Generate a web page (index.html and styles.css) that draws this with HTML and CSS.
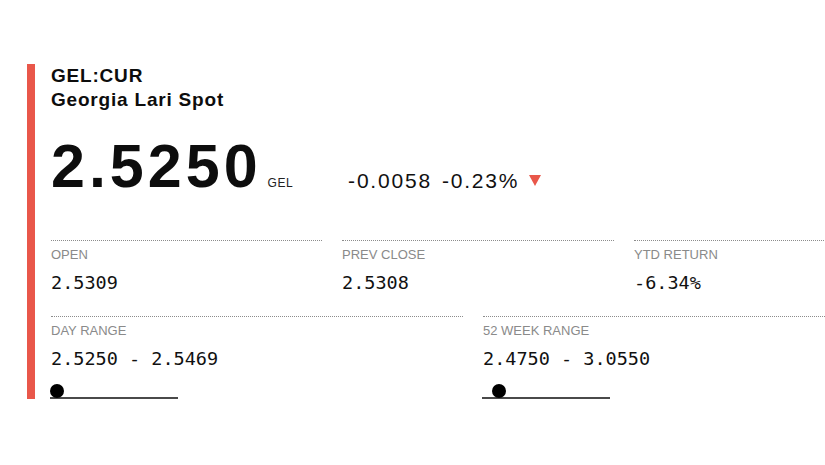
FILE: index.html
```html
<!DOCTYPE html>
<html lang="en">
<head>
<meta charset="utf-8">
<title>GEL:CUR Georgia Lari Spot</title>
<link rel="stylesheet" href="styles.css">
</head>
<body>
<div class="quote">
  <div class="accent"></div>
  <div class="content">
    <h1 class="title">
      <span class="ticker">GEL:CUR</span>
      <span class="name">Georgia Lari Spot</span>
    </h1>
    <div class="price-row">
      <span class="price">2.5250</span>
      <span class="currency">GEL</span>
      <span class="change">-0.0058</span>
      <span class="change pct">-0.23%</span>
      <span class="arrow"></span>
    </div>
    <div class="stats three">
      <div class="stat">
        <div class="label">OPEN</div>
        <div class="value">2.5309</div>
      </div>
      <div class="stat">
        <div class="label">PREV CLOSE</div>
        <div class="value">2.5308</div>
      </div>
      <div class="stat">
        <div class="label">YTD RETURN</div>
        <div class="value">-6.34%</div>
      </div>
    </div>
    <div class="stats two">
      <div class="stat last">
        <div class="label">DAY RANGE</div>
        <div class="value">2.5250 - 2.5469</div>
        <div class="range"><span class="dot" style="left:0px"></span></div>
      </div>
      <div class="stat last">
        <div class="label">52 WEEK RANGE</div>
        <div class="value">2.4750 - 3.0550</div>
        <div class="range"><span class="dot" style="left:10px"></span></div>
      </div>
    </div>
  </div>
</div>
</body>
</html>
```
FILE: styles.css
```css
html, body {
  margin: 0;
  padding: 0;
  background: #ffffff;
  overflow: hidden;
}

body {
  font-family: "Liberation Sans", Arial, sans-serif;
  color: #111111;
  width: 825px;
  height: 465px;
}

.quote {
  display: flex;
  margin: 64px 0 0 27px;
  width: 798px;
  overflow: hidden;
}

.accent {
  width: 8px;
  background: #e9574a;
  flex: none;
}

.content {
  padding-left: 16px;
  flex: none;
}

.title {
  margin: 0;
  font-size: 19px;
  line-height: 24px;
  font-weight: 700;
  letter-spacing: 0.8px;
  color: #0d0d0d;
}

.title span {
  display: block;
}

.price-row {
  display: flex;
  align-items: baseline;
  margin-top: 24px;
}

.price {
  font-size: 61px;
  line-height: 61px;
  font-weight: 700;
  letter-spacing: 4px;
  color: #0d0d0d;
}

.currency {
  font-size: 12px;
  letter-spacing: 0.5px;
  margin-left: 6px;
  color: #222;
}

.change {
  font-size: 21px;
  letter-spacing: 1.8px;
  margin-left: 55px;
  position: relative;
  top: 1px;
  color: #111;
}

.change.pct {
  margin-left: 10px;
}

.arrow {
  width: 0;
  height: 0;
  margin-left: 10px;
  position: relative;
  top: -1px;
  border-left: 6px solid transparent;
  border-right: 6px solid transparent;
  border-top: 11px solid #e9574a;
}

.stats {
  display: grid;
  column-gap: 20px;
}

.stats.three {
  margin-top: 43px;
  grid-template-columns: 271px 272px 272px;
}

.stats.two {
  grid-template-columns: 412px 412px;
}

.stat {
  border-top: 1px dotted #8c8c8c;
  padding-top: 6px;
  padding-bottom: 22px;
}

.stat.last {
  padding-bottom: 0;
}

.label {
  font-size: 13px;
  line-height: 16px;
  color: #8a8a8a;
}

.value {
  margin-top: 9px;
  font-family: "DejaVu Sans Mono", "Liberation Mono", monospace;
  font-size: 18.5px;
  line-height: 22px;
  color: #111;
}

.range {
  position: relative;
  width: 128px;
  height: 15px;
  margin-top: 14px;
  margin-left: -1px;
  border-bottom: 2px solid #4a4a4a;
  box-sizing: border-box;
}

.dot {
  position: absolute;
  top: 0;
  width: 14px;
  height: 14px;
  border-radius: 50%;
  background: #000;
}
```
